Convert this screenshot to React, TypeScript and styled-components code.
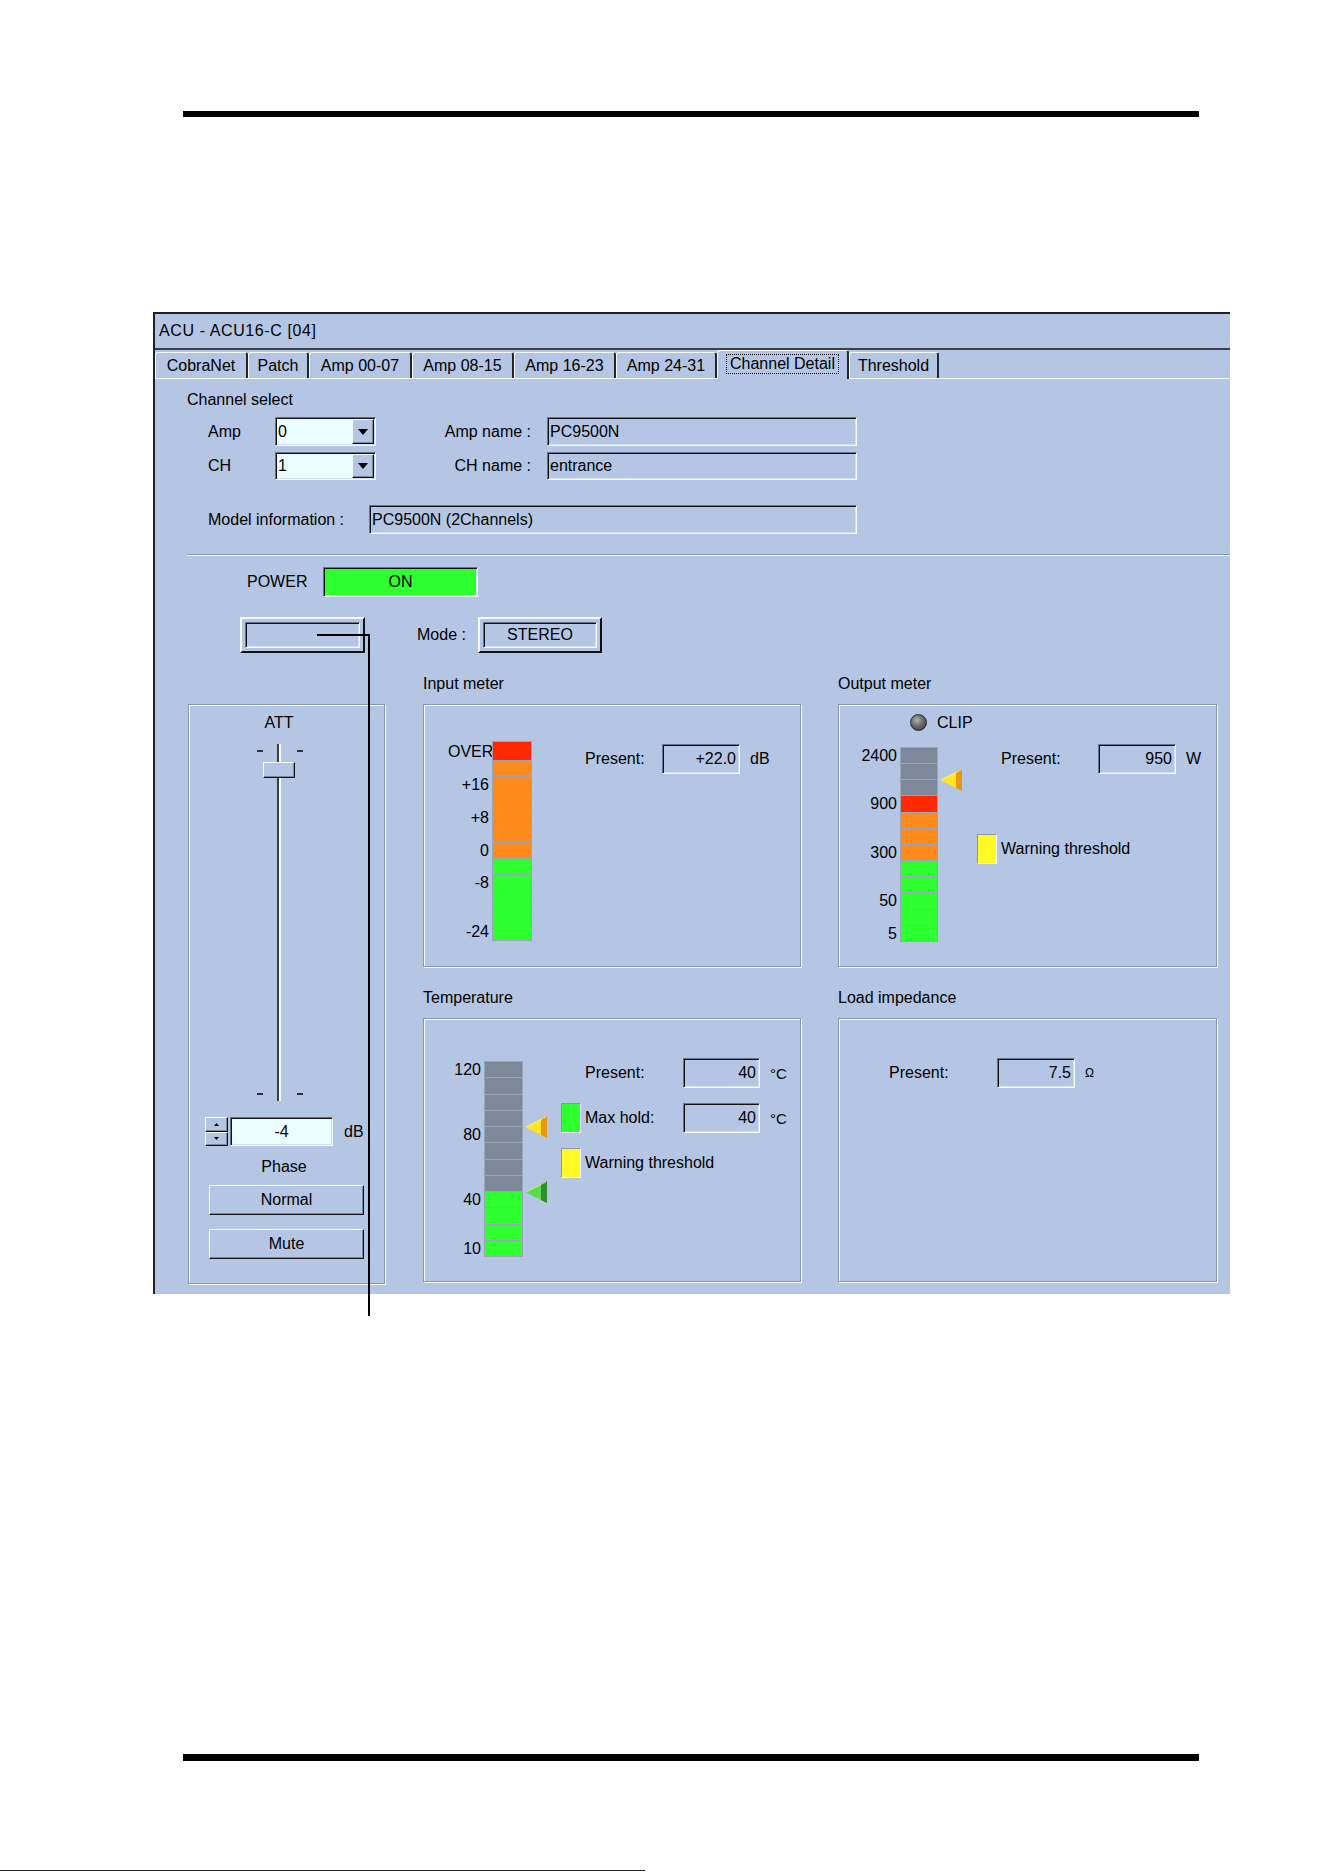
import React from "react";
import styled, { createGlobalStyle, css } from "styled-components";

const BLUE = "#B4C6E4";
const HI = "#F4FAFF";
const MID = "#7C889C";
const INK = "#111111";
const CYAN = "#EAFEFE";
const RED = "#FF2800";
const ORANGE = "#FF8A1C";
const GREEN = "#2EFF2E";
const GRAY = "#7D889B";
const YELLOW = "#FFFA26";

const GlobalStyle = createGlobalStyle`
  html, body { margin: 0; padding: 0; background: #ffffff; }
  body { font-family: "Liberation Sans", Arial, sans-serif; color: #000; }
`;

const sunken = css`
  box-sizing: border-box;
  border: 1px solid;
  border-color: #66728a ${HI} ${HI} #66728a;
  box-shadow: inset 1px 1px 0 ${INK}, inset -1px -1px 0 #d4e0f2;
`;

const raised = css`
  box-sizing: border-box;
  border: 1px solid;
  border-color: ${HI} ${INK} ${INK} ${HI};
  box-shadow: inset -1px -1px 0 ${MID};
`;

const etched = css`
  box-sizing: border-box;
  border: 1px solid #8a96ac;
  box-shadow: inset 1px 1px 0 ${HI}, 1px 1px 0 ${HI};
`;

/* ---------- page ---------- */

const Page = styled.div`
  position: relative;
  width: 1323px;
  height: 1872px;
  overflow: hidden;
  display: flex;
  flex-direction: column;
  font-family: "Liberation Sans", Arial, sans-serif;
  font-size: 16px;
  color: #000;
  background: #fff;
`;

const Rule = styled.div<{ $top: number; $h: number }>`
  flex: none;
  margin: ${(p) => p.$top}px 0 0 183px;
  width: 1016px;
  height: ${(p) => p.$h}px;
  background: #000;
`;

const FootLine = styled.div`
  flex: none;
  margin-top: 109px;
  width: 645px;
  height: 1px;
  background: #222;
`;

/* leader line pointing from the blank indicator down to its caption */
const Leader = styled.div`
  position: absolute;
  left: 317px;
  top: 634px;
  width: 53px;
  height: 682px;
  box-sizing: border-box;
  border-top: 2px solid #000;
  border-right: 2px solid #000;
  pointer-events: none;
`;

/* ---------- window chrome ---------- */

const Window = styled.section`
  flex: none;
  margin: 195px 0 0 153px;
  width: 1077px;
  height: 982px;
  box-sizing: border-box;
  border-top: 2px solid #222;
  border-left: 2px solid #222;
  background: ${BLUE};
  display: flex;
  flex-direction: column;
  overflow: hidden;
`;

const TitleBar = styled.header`
  height: 34px;
  line-height: 34px;
  padding-left: 4px;
  border-bottom: 2px solid #3a404a;
  white-space: nowrap;
  letter-spacing: 0.6px;
`;

const TabStrip = styled.nav`
  display: flex;
  align-items: flex-end;
  height: 28px;
  border-bottom: 1px solid ${HI};
`;

const Tab = styled.div<{ $w: number; $active?: boolean }>`
  position: relative;
  z-index: ${(p) => (p.$active ? 1 : 0)};
  box-sizing: border-box;
  width: ${(p) => p.$w}px;
  height: ${(p) => (p.$active ? 29 : 26)}px;
  margin-bottom: ${(p) => (p.$active ? -1 : 0)}px;
  padding-bottom: ${(p) => (p.$active ? 3 : 0)}px;
  display: flex;
  align-items: center;
  justify-content: center;
  border-top: 1px solid ${HI};
  border-left: 1px solid ${HI};
  border-right: 2px solid #262626;
  border-radius: 3px 3px 0 0;
  background: ${BLUE};
  white-space: nowrap;
`;

const FocusRing = styled.span`
  padding: 0 3px;
  line-height: 18px;
  outline: 1px dotted #000;
`;

const Content = styled.main`
  display: flex;
  flex-direction: column;
  align-items: flex-start;
  padding: 12px 0 0 32px;
`;

const Caption = styled.div`
  line-height: 18px;
  white-space: nowrap;
`;

/* ---------- channel select ---------- */

const PickGrid = styled.div`
  display: grid;
  grid-template-columns: 67px 101px 171px 310px;
  grid-template-rows: 29px 28px;
  row-gap: 6px;
  align-items: center;
  margin: 8px 0 0 21px;
  white-space: nowrap;
`;

const Select = styled.div`
  ${sunken};
  height: 100%;
  display: flex;
  align-items: stretch;
  padding: 1px;
  background: ${CYAN};
`;

const SelectValue = styled.span`
  flex: 1;
  display: flex;
  align-items: center;
  padding-left: 1px;
`;

const DropButton = styled.span`
  ${raised};
  width: 22px;
  display: flex;
  align-items: center;
  justify-content: center;
  background: ${BLUE};
`;

const NameLabel = styled.span`
  text-align: right;
  padding-right: 16px;
`;

const TextBox = styled.div<{ $w?: number }>`
  ${sunken};
  ${(p) => (p.$w ? `width: ${p.$w}px;` : "")}
  height: 100%;
  display: flex;
  align-items: center;
  padding-left: 2px;
  background: ${BLUE};
  white-space: nowrap;
`;

const ModelRow = styled.div`
  display: flex;
  align-items: center;
  height: 29px;
  margin: 25px 0 0 21px;
`;

const ModelLabel = styled.span`
  width: 161px;
  white-space: nowrap;
`;

const Divider = styled.div`
  align-self: stretch;
  margin-top: 20px;
  border-top: 1px solid #8a96ac;
  border-bottom: 1px solid ${HI};
`;

/* ---------- power / mode ---------- */

const PowerRow = styled.div`
  display: flex;
  align-items: center;
  margin: 11px 0 0 60px;
`;

const PowerLabel = styled.span`
  width: 76px;
`;

const Lamp = styled.div<{ $on: boolean }>`
  ${sunken};
  width: 155px;
  height: 30px;
  display: flex;
  align-items: center;
  justify-content: center;
  background: ${(p) => (p.$on ? GREEN : BLUE)};
`;

const ButtonRow = styled.div`
  display: flex;
  align-items: center;
  margin: 20px 0 0 53px;
`;

const ModeLabel = styled.span`
  margin-left: 52px;
  width: 61px;
  white-space: nowrap;
`;

const FrameButton = styled.div<{ $w: number }>`
  box-sizing: border-box;
  width: ${(p) => p.$w}px;
  height: 36px;
  padding: 3px;
  border: 2px solid;
  border-color: ${HI} ${INK} ${INK} ${HI};
  background: ${BLUE};
`;

const FrameFace = styled.div`
  ${sunken};
  height: 100%;
  display: flex;
  align-items: center;
  justify-content: center;
`;

/* ---------- lower area ---------- */

const MainRow = styled.div`
  display: flex;
  align-items: flex-start;
  margin: 22px 0 0 1px;
`;

const AttBox = styled.div`
  ${etched};
  width: 197px;
  height: 580px;
  margin-top: 29px;
  display: flex;
  flex-direction: column;
  align-items: flex-start;
`;

const SliderColumn = styled.div`
  margin-left: 66px;
  width: 48px;
  display: flex;
  flex-direction: column;
  align-items: center;
`;

const AttTitle = styled.div`
  margin-top: 9px;
  line-height: 18px;
`;

const Slider = styled.div`
  position: relative;
  width: 48px;
  height: 357px;
  margin-top: 12px;
  display: flex;
  justify-content: center;
`;

const Groove = styled.div`
  box-sizing: border-box;
  width: 4px;
  height: 100%;
  border-left: 2px solid #3a3f48;
  border-right: 2px solid ${HI};
`;

const Tick = styled.span<{ $x: number; $y: number }>`
  position: absolute;
  left: ${(p) => p.$x}px;
  top: ${(p) => p.$y}px;
  width: 6px;
  height: 2px;
  background: #333;
`;

const Thumb = styled.span`
  ${raised};
  position: absolute;
  left: 8px;
  width: 32px;
  height: 16px;
  background: ${BLUE};
`;

const SpinRow = styled.div`
  display: flex;
  align-items: center;
  height: 29px;
  margin: 16px 0 0 16px;
`;

const Spinner = styled.div`
  display: flex;
  flex-direction: column;
  width: 23px;
  height: 29px;
`;

const SpinButton = styled.span`
  ${raised};
  flex: 1;
  display: flex;
  align-items: center;
  justify-content: center;
  background: ${BLUE};
`;

const AttField = styled.div`
  ${sunken};
  width: 103px;
  height: 29px;
  margin-left: 2px;
  display: flex;
  align-items: center;
  justify-content: center;
  background: ${CYAN};
`;

const AttUnit = styled.span`
  margin-left: 11px;
`;

const PhaseTitle = styled.div`
  align-self: stretch;
  text-align: center;
  padding-right: 5px;
  margin-top: 12px;
  line-height: 18px;
`;

const PushButton = styled.div<{ $top: number }>`
  ${raised};
  width: 155px;
  height: 30px;
  margin: ${(p) => p.$top}px 0 0 20px;
  display: flex;
  align-items: center;
  justify-content: center;
  background: ${BLUE};
`;

const Panels = styled.div`
  display: grid;
  grid-template-columns: 378px 379px;
  column-gap: 37px;
  row-gap: 22px;
  margin-left: 38px;
`;

const Group = styled.section`
  display: flex;
  flex-direction: column;
`;

const GroupTitle = styled.div`
  line-height: 18px;
  margin-bottom: 11px;
  white-space: nowrap;
`;

const GroupBox = styled.div<{ $h: number; $pad: number }>`
  ${etched};
  height: ${(p) => p.$h}px;
  display: flex;
  align-items: flex-start;
  padding-left: ${(p) => p.$pad}px;
`;

/* ---------- meters ---------- */

const MeterStack = styled.div<{ $top: number }>`
  margin-top: ${(p) => p.$top}px;
  display: flex;
  flex-direction: column;
`;

const ClipRow = styled.div`
  display: flex;
  align-items: center;
  gap: 10px;
  width: 52px;
  height: 17px;
  margin: 0 0 16px 54px;
  white-space: nowrap;
`;

const Led = styled.span`
  flex: none;
  box-sizing: border-box;
  width: 17px;
  height: 17px;
  border-radius: 50%;
  border: 1px solid #2c2c2c;
  background: radial-gradient(circle at 40% 35%, #b0b0b0 0, #6a6a6a 45%, #303030 100%);
`;

const MeterRow = styled.div`
  display: flex;
  align-items: flex-start;
`;

const Scale = styled.div`
  box-sizing: border-box;
  width: 44px;
  padding: 1px 3px 0 0;
  display: flex;
  flex-direction: column;
`;

const ScaleMark = styled.div<{ $h: number }>`
  height: ${(p) => p.$h}px;
  line-height: ${(p) => p.$h}px;
  text-align: right;
  white-space: nowrap;
`;

const Bar = styled.div<{ $w: number }>`
  box-sizing: border-box;
  width: ${(p) => p.$w}px;
  padding: 1px 1px 0;
  background: #98a4b8;
  display: flex;
  flex-direction: column;
`;

const Cell = styled.div<{ $h: number; $c: string }>`
  height: ${(p) => p.$h - 1}px;
  margin-bottom: 1px;
  background: ${(p) => p.$c};
`;

const PointerRail = styled.div`
  position: relative;
  width: 24px;
  align-self: stretch;
`;

const PointerSvg = styled.svg`
  position: absolute;
  left: 2px;
`;

const Readouts = styled.div<{ $top: number; $gap: number; $lw: number; $fw: number }>`
  margin: ${(p) => p.$top}px 0 0 ${(p) => p.$gap}px;
  display: grid;
  grid-template-columns: 24px ${(p) => p.$lw}px ${(p) => p.$fw}px auto;
  grid-auto-rows: 30px;
  row-gap: 15px;
  align-items: center;
  white-space: nowrap;
`;

const Swatch = styled.span<{ $c: string }>`
  grid-column: 1;
  box-sizing: border-box;
  width: 20px;
  height: 30px;
  border: 1px solid;
  border-color: #8a96ac ${HI} ${HI} #8a96ac;
  background: ${(p) => p.$c};
`;

const ReadLabel = styled.span<{ $wide?: boolean }>`
  grid-column: ${(p) => (p.$wide ? "2 / -1" : "2")};
`;

const ReadField = styled.div`
  ${sunken};
  grid-column: 3;
  height: 100%;
  display: flex;
  align-items: center;
  justify-content: flex-end;
  padding-right: 3px;
  background: ${BLUE};
`;

const Unit = styled.span<{ $size?: number }>`
  grid-column: 4;
  padding-left: 10px;
  font-size: ${(p) => p.$size ?? 16}px;
`;

const EmptyRow = styled.div`
  grid-column: 1 / -1;
`;

/* ---------- data ---------- */

type Seg = { c: string; h: number; label?: string };
type Mark = { at: number; fill: string; edge: string };

const repeat = (c: string, n: number): string[] => Array.from({ length: n }, () => c);

function buildSegments(colors: string[], pitch: number, labels: Record<number, string>, first?: number): Seg[] {
  return colors.map((c, i) => ({ c, h: i === 0 && first ? first : pitch, label: labels[i] }));
}

const INPUT_SEGS = buildSegments(
  [RED, ...repeat(ORANGE, 6), ...repeat(GREEN, 5)],
  16.35,
  { 0: "OVER", 2: "+16", 4: "+8", 6: "0", 8: "-8", 11: "-24" },
  19
);

const OUTPUT_SEGS = buildSegments(
  [...repeat(GRAY, 3), RED, ...repeat(ORANGE, 3), ...repeat(GREEN, 5)],
  16.17,
  { 0: "2400", 3: "900", 6: "300", 9: "50", 11: "5" }
);

const TEMP_SEGS = buildSegments(
  [...repeat(GRAY, 8), ...repeat(GREEN, 4)],
  16.25,
  { 0: "120", 4: "80", 8: "40", 11: "10" }
);

const WARN: Omit<Mark, "at"> = { fill: "#FFE61E", edge: "#E8980E" };
const HOLD: Omit<Mark, "at"> = { fill: "#58DC4E", edge: "#2E8E2E" };

const TABS = [
  { label: "CobraNet", w: 93 },
  { label: "Patch", w: 61 },
  { label: "Amp 00-07", w: 103 },
  { label: "Amp 08-15", w: 102 },
  { label: "Amp 16-23", w: 102 },
  { label: "Amp 24-31", w: 101 },
  { label: "Channel Detail", w: 132, active: true },
  { label: "Threshold", w: 90 },
];

/* attenuator: 0 dB at the top of the travel, -76 dB at the bottom */
const ATT_DB = -4;
const ATT_RANGE = 76;
const SLIDER_TRAVEL = 341;

/* ---------- small drawings ---------- */

function DownArrow() {
  return (
    <svg width="10" height="6" viewBox="0 0 10 6">
      <polygon points="0,0 10,0 5,6" fill="#000" />
    </svg>
  );
}

function SpinArrow({ up }: { up?: boolean }) {
  return (
    <svg width="5" height="3" viewBox="0 0 5 3">
      <polygon points={up ? "0,3 5,3 2.5,0" : "0,0 5,0 2.5,3"} fill="#000" />
    </svg>
  );
}

function Pointer({ top, fill, edge }: { top: number; fill: string; edge: string }) {
  return (
    <PointerSvg width="22" height="22" viewBox="0 0 22 22" style={{ top }}>
      <polygon points="0,11 22,0 22,22" fill={fill} />
      <polygon points="16,3 22,0 22,22 16,19" fill={edge} />
      <polyline points="1,11 21,1" stroke="#fff6a0" strokeWidth="1" fill="none" opacity="0.7" />
    </PointerSvg>
  );
}

function Meter({ segments, width, marks }: { segments: Seg[]; width: number; marks?: Mark[] }) {
  const boundary = (at: number) => 1 + segments.slice(0, at).reduce((s, g) => s + g.h, 0) - 0.5;
  return (
    <MeterRow>
      <Scale>
        {segments.map((s, i) => (
          <ScaleMark key={i} $h={s.h}>
            {s.label ?? ""}
          </ScaleMark>
        ))}
      </Scale>
      <Bar $w={width}>
        {segments.map((s, i) => (
          <Cell key={i} $h={s.h} $c={s.c} />
        ))}
      </Bar>
      {marks && (
        <PointerRail>
          {marks.map((m, i) => (
            <Pointer key={i} top={Math.round(boundary(m.at) - 11)} fill={m.fill} edge={m.edge} />
          ))}
        </PointerRail>
      )}
    </MeterRow>
  );
}

/* ---------- page ---------- */

export default function App() {
  const thumbTop = Math.round((Math.abs(ATT_DB) / ATT_RANGE) * SLIDER_TRAVEL);

  return (
    <>
      <GlobalStyle />
      <Page>
        <Rule $top={111} $h={6} />
        <Window>
          <TitleBar>ACU - ACU16-C [04]</TitleBar>
          <TabStrip>
            {TABS.map((t) => (
              <Tab key={t.label} $w={t.w} $active={t.active}>
                {t.active ? <FocusRing>{t.label}</FocusRing> : t.label}
              </Tab>
            ))}
          </TabStrip>

          <Content>
            <Caption>Channel select</Caption>
            <PickGrid>
              <span>Amp</span>
              <Select>
                <SelectValue>0</SelectValue>
                <DropButton>
                  <DownArrow />
                </DropButton>
              </Select>
              <NameLabel>Amp name :</NameLabel>
              <TextBox>PC9500N</TextBox>

              <span>CH</span>
              <Select>
                <SelectValue>1</SelectValue>
                <DropButton>
                  <DownArrow />
                </DropButton>
              </Select>
              <NameLabel>CH name :</NameLabel>
              <TextBox>entrance</TextBox>
            </PickGrid>

            <ModelRow>
              <ModelLabel>Model information :</ModelLabel>
              <TextBox $w={488}>PC9500N (2Channels)</TextBox>
            </ModelRow>

            <Divider />

            <PowerRow>
              <PowerLabel>POWER</PowerLabel>
              <Lamp $on>ON</Lamp>
            </PowerRow>

            <ButtonRow>
              <FrameButton $w={125}>
                <FrameFace />
              </FrameButton>
              <ModeLabel>Mode :</ModeLabel>
              <FrameButton $w={124}>
                <FrameFace>STEREO</FrameFace>
              </FrameButton>
            </ButtonRow>

            <MainRow>
              <AttBox>
                <SliderColumn>
                  <AttTitle>ATT</AttTitle>
                  <Slider>
                    <Groove />
                    <Tick $x={2} $y={6} />
                    <Tick $x={42} $y={6} />
                    <Tick $x={2} $y={349} />
                    <Tick $x={42} $y={349} />
                    <Thumb style={{ top: thumbTop }} />
                  </Slider>
                </SliderColumn>
                <SpinRow>
                  <Spinner>
                    <SpinButton>
                      <SpinArrow up />
                    </SpinButton>
                    <SpinButton>
                      <SpinArrow />
                    </SpinButton>
                  </Spinner>
                  <AttField>{ATT_DB}</AttField>
                  <AttUnit>dB</AttUnit>
                </SpinRow>
                <PhaseTitle>Phase</PhaseTitle>
                <PushButton $top={9}>Normal</PushButton>
                <PushButton $top={14}>Mute</PushButton>
              </AttBox>

              <Panels>
                <Group>
                  <GroupTitle>Input meter</GroupTitle>
                  <GroupBox $h={263} $pad={24}>
                    <MeterStack $top={36}>
                      <Meter segments={INPUT_SEGS} width={40} />
                    </MeterStack>
                    <Readouts $top={39} $gap={29} $lw={77} $fw={78}>
                      <ReadLabel>Present:</ReadLabel>
                      <ReadField>+22.0</ReadField>
                      <Unit>dB</Unit>
                    </Readouts>
                  </GroupBox>
                </Group>

                <Group>
                  <GroupTitle>Output meter</GroupTitle>
                  <GroupBox $h={263} $pad={17}>
                    <MeterStack $top={9}>
                      <ClipRow>
                        <Led />
                        <span>CLIP</span>
                      </ClipRow>
                      <Meter segments={OUTPUT_SEGS} width={38} marks={[{ at: 2, ...WARN }]} />
                    </MeterStack>
                    <Readouts $top={39} $gap={15} $lw={97} $fw={78}>
                      <ReadLabel>Present:</ReadLabel>
                      <ReadField>950</ReadField>
                      <Unit>W</Unit>
                      <EmptyRow />
                      <Swatch $c={YELLOW} />
                      <ReadLabel $wide>Warning threshold</ReadLabel>
                    </Readouts>
                  </GroupBox>
                </Group>

                <Group>
                  <GroupTitle>Temperature</GroupTitle>
                  <GroupBox $h={264} $pad={16}>
                    <MeterStack $top={42}>
                      <Meter
                        segments={TEMP_SEGS}
                        width={39}
                        marks={[
                          { at: 4, ...WARN },
                          { at: 8, ...HOLD },
                        ]}
                      />
                    </MeterStack>
                    <Readouts $top={39} $gap={14} $lw={98} $fw={77}>
                      <ReadLabel>Present:</ReadLabel>
                      <ReadField>40</ReadField>
                      <Unit $size={15}>°C</Unit>
                      <Swatch $c={GREEN} />
                      <ReadLabel>Max hold:</ReadLabel>
                      <ReadField>40</ReadField>
                      <Unit $size={15}>°C</Unit>
                      <Swatch $c={YELLOW} />
                      <ReadLabel $wide>Warning threshold</ReadLabel>
                    </Readouts>
                  </GroupBox>
                </Group>

                <Group>
                  <GroupTitle>Load impedance</GroupTitle>
                  <GroupBox $h={264} $pad={26}>
                    <Readouts $top={39} $gap={0} $lw={108} $fw={78}>
                      <ReadLabel>Present:</ReadLabel>
                      <ReadField>7.5</ReadField>
                      <Unit $size={12}>Ω</Unit>
                    </Readouts>
                  </GroupBox>
                </Group>
              </Panels>
            </MainRow>
          </Content>
        </Window>
        <Rule $top={460} $h={7} />
        <FootLine />
        <Leader />
      </Page>
    </>
  );
}
